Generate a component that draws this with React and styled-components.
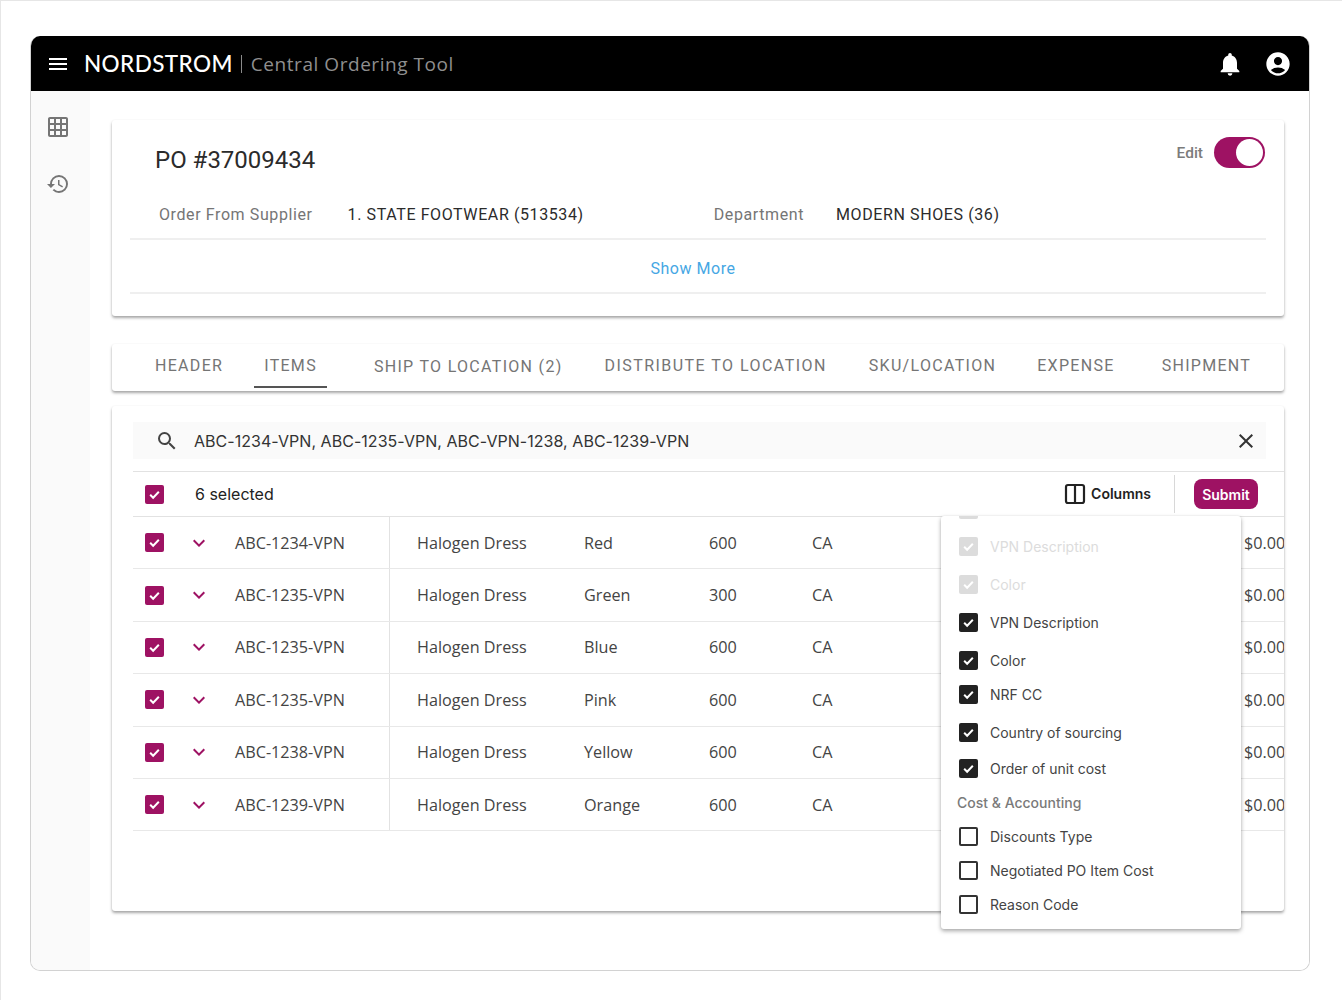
import React from 'react';
import styled, { createGlobalStyle } from 'styled-components';
import { MdMenu, MdNotifications, MdAccountCircle, MdGridOn, MdHistory, MdSearch, MdClose, MdKeyboardArrowDown } from 'react-icons/md';
import { Columns2 } from 'lucide-react';

const GlobalStyle = createGlobalStyle`
  html, body { margin: 0; padding: 0; background: #fff; }
  * { box-sizing: border-box; }
  body { font-family: Roboto, "Liberation Sans", sans-serif; }
`;

const Page = styled.div`
  width: 1342px;
  height: 1000px;
  overflow: hidden;
  padding: 35px 31px 0 29px;
  border-top: 1px solid #e6e6e6;
  border-left: 1px solid #e6e6e6;
`;

const Frame = styled.div`
  width: 1280px;
  height: 935px;
  border: 1px solid #d2d2d2;
  border-top: 0;
  border-radius: 10px;
  display: flex;
  flex-direction: column;
  overflow: hidden;
`;

const TopBar = styled.header`
  height: 55px;
  margin: 0 -1px;
  flex: none;
  background: #000;
  display: flex;
  align-items: center;
  padding: 0 18px 0 16px;
  color: #fff;
`;

const MenuButton = styled.span`
  display: flex;
  margin-right: 14px;
  font-size: 24px;
`;

const Logo = styled.span`
  padding-top: 1px;
  font-family: Lato, sans-serif;
  font-size: 22.5px;
  font-weight: 500;
  letter-spacing: 0.4px;
  line-height: 1;
`;

const AppName = styled.span`
  margin-left: 8px;
  padding-left: 9px;
  border-left: 1px solid #8a8a8a;
  font-family: "Open Sans", sans-serif;
  font-size: 19px;
  line-height: 18px;
  letter-spacing: 0.55px;
  color: #8f8f8f;
`;

const TopActions = styled.div`
  margin-left: auto;
  display: flex;
  align-items: center;
  gap: 20px;
  font-size: 28px;
  & > svg { display: block; }
`;

const Body = styled.div`
  flex: 1;
  display: flex;
  min-height: 0;
`;

const SideNav = styled.nav`
  width: 59px;
  flex: none;
  background: #fafafa;
  display: flex;
  flex-direction: column;
  align-items: center;
  gap: 33px;
  padding: 24px 5px 0 0;
  color: #757575;
  font-size: 24px;
  & > svg { display: block; }
`;

const Main = styled.main`
  flex: 1;
  min-width: 0;
  padding: 29px 25px 0 22px;
  display: flex;
  flex-direction: column;
  background: #fff;
`;

const Card = styled.section`
  background: #fff;
  border-radius: 3px;
  box-shadow: 0 2px 3px rgba(0, 0, 0, 0.35), 0 0 2px rgba(0, 0, 0, 0.04);
`;

const SummaryCard = styled(Card)`
  height: 196px;
  padding: 0 18px;
  flex: none;
`;

const TitleRow = styled.div`
  height: 79px;
  padding-right: 1px;
  display: flex;
  align-items: flex-start;
  justify-content: space-between;
`;

const PoTitle = styled.h1`
  margin: 24px 0 0 25px;
  font-size: 24px;
  font-weight: 400;
  line-height: 32px;
  color: #2b2b2b;
`;

const EditGroup = styled.div`
  margin-top: 17px;
  display: flex;
  align-items: center;
  gap: 11px;
`;

const EditLabel = styled.span`
  font-size: 15.5px;
  font-weight: 500;
  color: #7b7b7b;
`;

const Toggle = styled.span`
  width: 51px;
  height: 31px;
  border-radius: 16px;
  background: #9e1263;
  display: flex;
  justify-content: flex-end;
  align-items: center;
  padding-right: 2px;
`;

const Knob = styled.span`
  width: 27px;
  height: 27px;
  border-radius: 50%;
  background: #fff;
`;

const InfoRow = styled.div`
  height: 41px;
  padding-bottom: 9px;
  display: flex;
  align-items: center;
  border-bottom: 2px solid #efefef;
  font-size: 16px;
  letter-spacing: 0.6px;
`;

const InfoLabel = styled.span`
  color: #757575;
  margin-left: ${(p) => p.$left}px;
`;

const InfoValue = styled.span`
  color: #2b2b2b;
  margin-left: ${(p) => p.$left}px;
`;

const ShowMoreRow = styled.div`
  height: 54px;
  padding: 4px 10px 0 0;
  display: flex;
  align-items: center;
  justify-content: center;
  border-bottom: 2px solid #efefef;
  font-size: 16px;
  color: #46a7e4;
  letter-spacing: 0.55px;
`;

const TabsCard = styled(Card)`
  margin-top: 28px;
  height: 47px;
  flex: none;
  display: flex;
  padding-left: 33px;
`;

const Tab = styled.div`
  height: 44px;
  padding: 0 10px;
  margin-left: ${(p) => p.$gap || 0}px;
  display: flex;
  align-items: center;
  padding-top: ${(p) => (p.$low ? 3 : 1)}px;
  font-size: 16px;
  letter-spacing: ${(p) => p.$spacing || 1.3}px;
  color: #757575;
  white-space: nowrap;
  border-bottom: 2px solid ${(p) => (p.$active ? '#555' : 'transparent')};
`;

const TableCard = styled(Card)`
  margin-top: 15px;
  height: 505px;
  flex: none;
  position: relative;
  padding: 16px 0 0 21px;
`;

const SearchBar = styled.div`
  height: 37px;
  margin-right: 18px;
  background: #fafafa;
  display: flex;
  align-items: center;
  padding: 0 8px 0 22px;
  font-family: Inter, sans-serif;
  font-size: 16px;
  letter-spacing: 0.04px;
  color: #333;
  & > svg { flex: none; }
`;

const SearchText = styled.span`
  margin-left: 15px;
  flex: 1;
`;

const Toolbar = styled.div`
  margin-top: 12px;
  height: 46px;
  display: flex;
  align-items: center;
  padding: 0 26px 0 12px;
  border-top: 1px solid #e2e2e2;
  border-bottom: 1px solid #e2e2e2;
`;

const SelectedText = styled.span`
  margin-left: 31px;
  font-family: Inter, sans-serif;
  font-size: 16px;
  color: #222;
`;

const ColumnsButton = styled.span`
  margin-left: auto;
  display: flex;
  align-items: center;
  gap: 4px;
  font-family: Inter, sans-serif;
  font-size: 14px;
  font-weight: 600;
  color: #222;
`;

const ColumnsLabel = styled.span`
  margin-top: -1px;
`;

const ToolbarDivider = styled.span`
  width: 1px;
  height: 38px;
  margin: 0 19px 0 23px;
  background: #d8d8d8;
`;

const SubmitButton = styled.button`
  width: 64px;
  height: 30px;
  border: 0;
  padding: 0;
  border-radius: 8px;
  background: #9e1263;
  color: #fff;
  font: 600 14px Inter, sans-serif;
`;

const Row = styled.div`
  height: 52.4px;
  display: grid;
  grid-template-columns: 46px 56px 154px 195px 125px 103px 432px 41px;
  align-items: center;
  border-bottom: 1px solid #e8e8e8;
  font-family: "Open Sans", sans-serif;
  font-size: 16.2px;
  color: #444;
  overflow: hidden;
  white-space: nowrap;
`;

const CheckCell = styled.div`
  padding-left: 12px;
`;

const ChevronCell = styled.div`
  padding-left: 8px;
  display: flex;
  color: #9e1263;
  font-size: 20px;
`;

const NameCell = styled.div`
  height: 100%;
  display: flex;
  align-items: center;
  padding-left: 27px;
  border-left: 1px solid #e2e2e2;
`;

const CheckBox = styled.span`
  width: 19px;
  height: 19px;
  border-radius: 2px;
  display: flex;
  align-items: center;
  justify-content: center;
  flex: none;
  background: ${(p) => (p.$off ? '#fff' : p.$bg)};
  border: ${(p) => (p.$off ? '2px solid #333' : '0')};
`;

const Dropdown = styled.div`
  position: absolute;
  left: 829px;
  top: 110px;
  width: 300px;
  height: 413px;
  background: #fff;
  border-radius: 3px;
  box-shadow: 0 2px 4px rgba(0, 0, 0, 0.35), 0 0 2px rgba(0, 0, 0, 0.06);
  overflow: hidden;
`;

const DropdownList = styled.div`
  margin-top: -24px;
`;

const OptionRow = styled.div`
  height: 34px;
  margin-top: ${(p) => p.$gap || 0}px;
  padding-left: 18px;
  display: flex;
  align-items: center;
  gap: 12px;
  font-family: Inter, sans-serif;
  font-size: 14px;
  color: ${(p) => (p.$disabled ? '#dcdcdc' : '#444')};
`;

const GroupLabel = styled.div`
  height: 34px;
  padding-left: 16px;
  display: flex;
  align-items: center;
  font-family: Inter, sans-serif;
  font-size: 14px;
  font-weight: 500;
  color: #7a7a7a;
`;

const Tick = ({ size = 13 }) => (
  <svg width={size} height={size} viewBox="0 0 24 24" fill="none">
    <path d="M4 12.5l5.5 5.5L20 7" stroke="#fff" strokeWidth="3.6" />
  </svg>
);

const Box = ({ bg = '#9e1263', off }) => (
  <CheckBox $bg={bg} $off={off}>{!off && <Tick />}</CheckBox>
);

const tabs = [
  { label: 'HEADER' },
  { label: 'ITEMS', gap: 21, active: true },
  { label: 'SHIP TO LOCATION (2)', gap: 37, low: true },
  { label: 'DISTRIBUTE TO LOCATION', gap: 22, spacing: 1.45 },
  { label: 'SKU/LOCATION', gap: 22 },
  { label: 'EXPENSE', gap: 21 },
  { label: 'SHIPMENT', gap: 27 },
];

const rows = [
  ['ABC-1234-VPN', 'Red', '600'],
  ['ABC-1235-VPN', 'Green', '300'],
  ['ABC-1235-VPN', 'Blue', '600'],
  ['ABC-1235-VPN', 'Pink', '600'],
  ['ABC-1238-VPN', 'Yellow', '600'],
  ['ABC-1239-VPN', 'Orange', '600'],
];

const options = [
  { label: 'VPN', disabled: true },
  { label: 'VPN Description', disabled: true, gap: 3 },
  { label: 'Color', disabled: true, gap: 4 },
  { label: 'VPN Description', gap: 4 },
  { label: 'Color', gap: 4 },
  { label: 'NRF CC' },
  { label: 'Country of sourcing', gap: 4 },
  { label: 'Order of unit cost', gap: 2 },
];

const extraOptions = ['Discounts Type', 'Negotiated PO Item Cost', 'Reason Code'];

export default function App() {
  return (
    <Page>
      <GlobalStyle />
      <Frame>
        <TopBar>
          <MenuButton><MdMenu /></MenuButton>
          <Logo>NORDSTROM</Logo>
          <AppName>Central Ordering Tool</AppName>
          <TopActions>
            <MdNotifications />
            <MdAccountCircle />
          </TopActions>
        </TopBar>
        <Body>
          <SideNav>
            <MdGridOn />
            <MdHistory />
          </SideNav>
          <Main>
            <SummaryCard>
              <TitleRow>
                <PoTitle>PO #37009434</PoTitle>
                <EditGroup>
                  <EditLabel>Edit</EditLabel>
                  <Toggle><Knob /></Toggle>
                </EditGroup>
              </TitleRow>
              <InfoRow>
                <InfoLabel $left={29}>Order From Supplier</InfoLabel>
                <InfoValue $left={35}>1. STATE FOOTWEAR (513534)</InfoValue>
                <InfoLabel $left={130}>Department</InfoLabel>
                <InfoValue $left={32}>MODERN SHOES (36)</InfoValue>
              </InfoRow>
              <ShowMoreRow>Show More</ShowMoreRow>
            </SummaryCard>

            <TabsCard>
              {tabs.map((t) => (
                <Tab key={t.label} $gap={t.gap} $active={t.active} $low={t.low} $spacing={t.spacing}>{t.label}</Tab>
              ))}
            </TabsCard>

            <TableCard>
              <SearchBar>
                <MdSearch size={24} color="#444" />
                <SearchText>ABC-1234-VPN, ABC-1235-VPN, ABC-VPN-1238, ABC-1239-VPN</SearchText>
                <MdClose size={24} color="#333" />
              </SearchBar>
              <Toolbar>
                <Box />
                <SelectedText>6 selected</SelectedText>
                <ColumnsButton>
                  <Columns2 size={24} strokeWidth={2.2} />
                  <ColumnsLabel>Columns</ColumnsLabel>
                </ColumnsButton>
                <ToolbarDivider />
                <SubmitButton>Submit</SubmitButton>
              </Toolbar>
              {rows.map(([sku, color, qty], i) => (
                <Row key={i}>
                  <CheckCell><Box /></CheckCell>
                  <ChevronCell><MdKeyboardArrowDown size={24} /></ChevronCell>
                  <div>{sku}</div>
                  <NameCell>Halogen Dress</NameCell>
                  <div>{color}</div>
                  <div>{qty}</div>
                  <div>CA</div>
                  <div>$0.00</div>
                </Row>
              ))}
              <Dropdown>
                <DropdownList>
                  {options.map((o, i) => (
                    <OptionRow key={i} $gap={o.gap} $disabled={o.disabled}>
                      <Box bg={o.disabled ? '#dcdcdc' : '#222'} />
                      {o.label}
                    </OptionRow>
                  ))}
                  <GroupLabel>Cost &amp; Accounting</GroupLabel>
                  {extraOptions.map((label) => (
                    <OptionRow key={label}>
                      <Box off />
                      {label}
                    </OptionRow>
                  ))}
                </DropdownList>
              </Dropdown>
            </TableCard>
          </Main>
        </Body>
      </Frame>
    </Page>
  );
}
